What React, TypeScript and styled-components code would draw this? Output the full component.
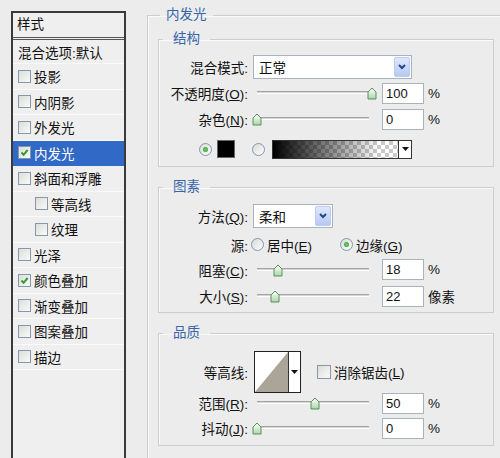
import React from "react";
import styled, { createGlobalStyle } from "styled-components";

const GlobalStyle = createGlobalStyle`
  html, body { margin: 0; padding: 0; }
  body {
    width: 500px;
    height: 458px;
    overflow: hidden;
    background: #ececec;
    font-family: "Liberation Sans", "Noto Sans CJK SC", sans-serif;
    font-size: 13.5px;
    color: #111;
  }
`;

const Dialog = styled.div`
  display: flex;
  align-items: flex-start;
  padding: 6px 0 0 11px;
  height: 458px;
  box-sizing: border-box;
  overflow: hidden;
`;

/* ---------- left style list ---------- */

const StyleList = styled.div`
  margin-top: 5px;
  width: 115px;
  height: 480px;
  flex-shrink: 0;
  box-sizing: border-box;
  border: 2px solid #3a3a3a;
  background: #efefef;
`;

const ListHeader = styled.div`
  height: 27px;
  box-sizing: border-box;
  padding-left: 4px;
  line-height: 24px;
  border-bottom: 3px double #555;
`;

const ListItem = styled.div<{ $indent?: boolean; $active?: boolean; $h?: number }>`
  display: flex;
  align-items: center;
  height: ${(p) => p.$h ?? 25.5}px;
  box-sizing: border-box;
  padding-left: ${(p) => (p.$indent ? 22 : 5)}px;
  border-bottom: 1px solid ${(p) => (p.$active ? "#3169c6" : "#fafafa")};
  background: ${(p) => (p.$active ? "#3169c6" : "transparent")};
  color: ${(p) => (p.$active ? "#fff" : "#111")};
  white-space: nowrap;
`;

const BoxCheck = styled.span<{ $size?: number }>`
  display: inline-flex;
  align-items: center;
  justify-content: center;
  width: ${(p) => p.$size ?? 13}px;
  height: ${(p) => p.$size ?? 13}px;
  box-sizing: border-box;
  border: 1px solid #8497ab;
  background: linear-gradient(135deg, #dcdcd8, #fafafa);
  margin-right: 3px;
  flex-shrink: 0;
`;

function Check({ on, size }: { on?: boolean; size?: number }) {
  return (
    <BoxCheck $size={size}>
      {on && (
        <svg width="9" height="9" viewBox="0 0 9 9">
          <path d="M1.5 4.5 L3.6 6.8 L7.6 2" fill="none" stroke="#2f9e2f" strokeWidth="2" />
        </svg>
      )}
    </BoxCheck>
  );
}

const layers = [
  { name: "投影" },
  { name: "内阴影" },
  { name: "外发光" },
  { name: "内发光", on: true, active: true },
  { name: "斜面和浮雕" },
  { name: "等高线", indent: true },
  { name: "纹理", indent: true },
  { name: "光泽" },
  { name: "颜色叠加", on: true },
  { name: "渐变叠加" },
  { name: "图案叠加" },
  { name: "描边" },
];

/* ---------- group boxes ---------- */

const Outer = styled.fieldset`
  margin: 0 0 0 21px;
  padding: 0;
  width: 380px;
  min-width: 0;
  flex-shrink: 0;
  border: 1px solid #cdcdcd;
  box-shadow: inset 1px 1px 0 #fafafa;
`;

const Legend = styled.legend<{ $shift?: number }>`
  margin-left: ${(p) => p.$shift ?? 4}px;
  padding: 0 ${(p) => (p.$shift ? 6 : 10)}px;
  line-height: 18px;
  color: #3765a8;
`;

const OuterBody = styled.div`
  padding: 6px 0 30px 10px;
`;

const Group = styled.fieldset<{ $gap?: number }>`
  margin: ${(p) => p.$gap ?? 0}px 0 0 0;
  padding: 0;
  width: 336px;
  box-sizing: border-box;
  min-width: 0;
  border: 1px solid #cdcdcd;
  box-shadow: inset 1px 1px 0 #fafafa;
`;

const GroupBody = styled.div<{ $top: number; $bottom: number }>`
  padding: ${(p) => p.$top}px 0 ${(p) => p.$bottom}px 0;
`;

const Row = styled.div<{ $h: number; $indent?: number }>`
  display: flex;
  align-items: center;
  height: ${(p) => p.$h}px;
  padding-left: ${(p) => p.$indent ?? 0}px;
  white-space: nowrap;
`;

const Label = styled.div`
  width: 94px;
  box-sizing: border-box;
  padding-right: 5px;
  text-align: right;
  flex-shrink: 0;
`;

/* ---------- controls ---------- */

const Select = styled.div<{ $w: number }>`
  width: ${(p) => p.$w}px;
  height: 24px;
  box-sizing: border-box;
  border: 1px solid #a9b3bf;
  background: #fff;
  display: flex;
  align-items: center;
  justify-content: space-between;
  padding: 1px 1px 1px 5px;
`;

const DropBtn = styled.div`
  width: 16px;
  height: 20px;
  box-sizing: border-box;
  border: 1px solid #b9cbee;
  border-radius: 2px;
  background: linear-gradient(#dfe8fc, #b6c9f3);
  display: flex;
  align-items: center;
  justify-content: center;
`;

function Dropdown({ w, value }: { w: number; value: string }) {
  return (
    <Select $w={w}>
      <span>{value}</span>
      <DropBtn>
        <svg width="10" height="8" viewBox="0 0 10 8">
          <path d="M2 2 L5 5 L8 2" fill="none" stroke="#27468a" strokeWidth="2" />
        </svg>
      </DropBtn>
    </Select>
  );
}

const SliderWrap = styled.div`
  position: relative;
  width: 125px;
  height: 16px;
  flex-shrink: 0;
`;

const Track = styled.div`
  position: absolute;
  left: 4px;
  width: 112px;
  top: 6px;
  height: 3px;
  box-sizing: border-box;
  border-top: 1px solid #a3a3a3;
  border-bottom: 1px solid #fff;
  background: #d6d6d6;
`;

const Thumb = styled.svg`
  position: absolute;
  top: 2px;
`;

function Slider({ frac }: { frac: number }) {
  return (
    <SliderWrap>
      <Track />
      <Thumb width="10" height="13" viewBox="0 0 10 13" style={{ left: 4 + frac * 115 - 5 }}>
        <defs>
          <linearGradient id="tg" x1="0" y1="0" x2="0" y2="1">
            <stop offset="0" stopColor="#ffffff" />
            <stop offset="1" stopColor="#a8d8a8" />
          </linearGradient>
        </defs>
        <path d="M1 5 L5 1 L9 5 L9 12 L1 12 Z" fill="url(#tg)" stroke="#5d8f5d" strokeWidth="1" />
      </Thumb>
    </SliderWrap>
  );
}

const NumBox = styled.div`
  width: 42px;
  height: 21px;
  box-sizing: border-box;
  margin-left: 4px;
  border: 1px solid #a9b3bf;
  background: #fff;
  padding-left: 3px;
  font-size: 13px;
  line-height: 19px;
`;

const Unit = styled.span`
  margin-left: 4px;
`;

function SliderRow(props: { h: number; label: React.ReactNode; frac: number; value: string; unit: string }) {
  return (
    <Row $h={props.h}>
      <Label>{props.label}</Label>
      <Slider frac={props.frac} />
      <NumBox>{props.value}</NumBox>
      <Unit>{props.unit}</Unit>
    </Row>
  );
}

const RadioDot = styled.span<{ $on?: boolean; $gap?: number }>`
  position: relative;
  width: 13px;
  height: 13px;
  box-sizing: border-box;
  border-radius: 50%;
  border: 1px solid #7f9ab4;
  background: linear-gradient(135deg, #d9d9d6, #fcfcfc);
  margin-left: ${(p) => p.$gap ?? 0}px;
  flex-shrink: 0;
  &::after {
    content: "";
    display: ${(p) => (p.$on ? "block" : "none")};
    position: absolute;
    left: 3px;
    top: 3px;
    width: 5px;
    height: 5px;
    border-radius: 50%;
    background: radial-gradient(circle, #6fd06f, #2c9a2c);
  }
`;

const RadioText = styled.span`
  margin-left: 3px;
`;

const Swatch = styled.div`
  width: 18px;
  height: 18px;
  box-sizing: border-box;
  margin-left: 5px;
  border: 1px solid #666;
  background: #000;
`;

const GradientBox = styled.div`
  display: flex;
  width: 140px;
  height: 19px;
  box-sizing: border-box;
  margin-left: 7px;
  border: 1px solid #333;
`;

const GradientFill = styled.div`
  flex: 1;
  background: linear-gradient(90deg, #000, rgba(0, 0, 0, 0) 85%),
    repeating-conic-gradient(#c9c9c9 0 25%, #ffffff 0 50%) 0 0 / 8px 8px;
`;

const SmallDrop = styled.div<{ $w: number }>`
  width: ${(p) => p.$w}px;
  border-left: 1px solid #333;
  background: #fff;
  display: flex;
  align-items: center;
  justify-content: center;
`;

const ContourBox = styled.div`
  display: flex;
  width: 47px;
  height: 42px;
  box-sizing: border-box;
  margin-left: 1px;
  border: 1px solid #222;
  background: #fff;
`;

const ContourPreview = styled.div`
  flex: 1;
  display: flex;
`;

const CheckLabel = styled.div`
  display: flex;
  align-items: center;
  margin-left: 16px;
`;

function Arrow() {
  return (
    <svg width="7" height="4" viewBox="0 0 7 4">
      <path d="M0 0 L7 0 L3.5 4 Z" fill="#111" />
    </svg>
  );
}

export default function App() {
  return (
    <>
      <GlobalStyle />
      <Dialog>
        <StyleList>
          <ListHeader>样式</ListHeader>
          <ListItem $h={24}>混合选项:默认</ListItem>
          {layers.map((l) => (
            <ListItem key={l.name} $indent={l.indent} $active={l.active}>
              <Check on={l.on} />
              {l.name}
            </ListItem>
          ))}
        </StyleList>

        <Outer>
          <Legend $shift={12}>内发光</Legend>
          <OuterBody>
            <Group>
              <Legend>结构</Legend>
              <GroupBody $top={6} $bottom={0}>
                <Row $h={26}>
                  <Label>混合模式:</Label>
                  <Dropdown w={159} value="正常" />
                </Row>
                <SliderRow h={26} label={<>不透明度(<u>O</u>):</>} frac={1} value="100" unit="%" />
                <SliderRow h={26} label={<>杂色(<u>N</u>):</>} frac={0} value="0" unit="%" />
                <Row $h={34} $indent={40}>
                  <RadioDot $on />
                  <Swatch />
                  <RadioDot $gap={17} />
                  <GradientBox>
                    <GradientFill />
                    <SmallDrop $w={12}>
                      <Arrow />
                    </SmallDrop>
                  </GradientBox>
                </Row>
              </GroupBody>
            </Group>

            <Group $gap={11}>
              <Legend>图素</Legend>
              <GroupBody $top={4} $bottom={2}>
                <Row $h={32}>
                  <Label>方法(<u>Q</u>):</Label>
                  <Dropdown w={80} value="柔和" />
                </Row>
                <Row $h={25}>
                  <Label>源:</Label>
                  <RadioDot $gap={-2} />
                  <RadioText>居中(<u>E</u>)</RadioText>
                  <RadioDot $on $gap={28} />
                  <RadioText>边缘(<u>G</u>)</RadioText>
                </Row>
                <SliderRow h={25} label={<>阻塞(<u>C</u>):</>} frac={0.18} value="18" unit="%" />
                <SliderRow h={28} label={<>大小(<u>S</u>):</>} frac={0.157} value="22" unit="像素" />
              </GroupBody>
            </Group>

            <Group $gap={11}>
              <Legend>品质</Legend>
              <GroupBody $top={9} $bottom={2}>
                <Row $h={42}>
                  <Label>等高线:</Label>
                  <ContourBox>
                    <ContourPreview>
                      <svg width="33" height="40" viewBox="0 0 33 40" preserveAspectRatio="none">
                        <path d="M0 40 L33 0 L33 40 Z" fill="#aaa499" />
                      </svg>
                    </ContourPreview>
                    <SmallDrop $w={12}>
                      <Arrow />
                    </SmallDrop>
                  </ContourBox>
                  <CheckLabel>
                    <Check size={14} />
                    消除锯齿(<u>L</u>)
                  </CheckLabel>
                </Row>
                <SliderRow h={20} label={<>范围(<u>R</u>):</>} frac={0.5} value="50" unit="%" />
                <SliderRow h={30} label={<>抖动(<u>J</u>):</>} frac={0} value="0" unit="%" />
              </GroupBody>
            </Group>
          </OuterBody>
        </Outer>
      </Dialog>
    </>
  );
}
